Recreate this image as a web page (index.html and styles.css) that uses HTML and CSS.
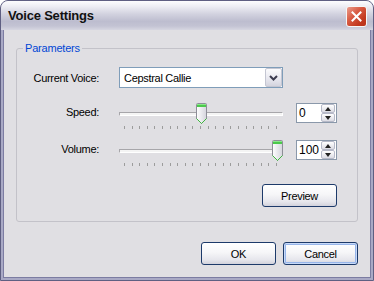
FILE: index.html
```html
<!DOCTYPE html>
<html lang="en">

<head>
    <meta charset="UTF-8">
    <meta name="viewport" content="width=device-width, initial-scale=1.0">
    <title>Voice Settings</title>
    <link rel="stylesheet" href="styles.css">
</head>

<body>
    <div class="window">
        <div class="titlebar">
            <span class="title">Voice Settings</span>
            <button class="close" title="Close">
                <svg width="11" height="11" viewBox="0 0 11 11">
                    <path d="M1.5 1.5 L9.5 9.5 M9.5 1.5 L1.5 9.5" stroke="#fff" stroke-width="2" stroke-linecap="square" fill="none"/>
                </svg>
            </button>
        </div>

        <div class="client">
            <div class="group">
                <div class="group-title">Parameters</div>

                <div class="row">
                    <label class="lbl">Current Voice:</label>
                    <div class="combo">
                        <span class="combo-text">Cepstral Callie</span>
                        <span class="combo-btn">
                            <svg width="9" height="6" viewBox="0 0 9 6">
                                <path d="M1 1 L4.5 4.5 L8 1" stroke="#3b3b4f" stroke-width="2" fill="none"/>
                            </svg>
                        </span>
                    </div>
                </div>

                <div class="row row-slider first">
                    <label class="lbl">Speed:</label>
                    <div class="slider">
                        <div class="channel">
                            <div class="track"></div>
                            <!-- value 0 of -10..10 -->
                            <span class="thumb" style="--pos: 0.5"></span>
                        </div>
                        <div class="ticks"></div>
                    </div>
                    <div class="spin">
                        <span class="spin-text">0</span>
                        <span class="spin-btns">
                            <span class="spin-btn up"></span>
                            <span class="spin-btn down"></span>
                        </span>
                    </div>
                </div>

                <div class="row row-slider">
                    <label class="lbl">Volume:</label>
                    <div class="slider">
                        <div class="channel">
                            <div class="track"></div>
                            <!-- value 100 of 0..100 -->
                            <span class="thumb" style="--pos: 1"></span>
                        </div>
                        <div class="ticks"></div>
                    </div>
                    <div class="spin">
                        <span class="spin-text">100</span>
                        <span class="spin-btns">
                            <span class="spin-btn up"></span>
                            <span class="spin-btn down"></span>
                        </span>
                    </div>
                </div>

                <div class="preview-row">
                    <button class="btn">Preview</button>
                </div>
            </div>

            <div class="actions">
                <button class="btn">OK</button>
                <button class="btn default">Cancel</button>
            </div>
        </div>
    </div>

    <script>
        // draw the 21 ticks under each slider
        document.querySelectorAll('.ticks').forEach(function (row) {
            for (let i = 0; i < 21; i++) {
                let t = document.createElement('span');
                t.className = 'tick';
                row.appendChild(t);
            }
        });

        // thumb graphic
        const thumbSvg =
            '<svg width="11" height="21" viewBox="0 0 11 21">' +
            '<defs><linearGradient id="tg" x1="0" y1="0" x2="1" y2="0">' +
            '<stop offset="0" stop-color="#ffffff"/><stop offset="1" stop-color="#d4d4dc"/>' +
            '</linearGradient></defs>' +
            '<path d="M1.5 0.5 H9.5 Q10.5 0.5 10.5 1.5 V15.5 L5.5 20.5 L0.5 15.5 V1.5 Q0.5 0.5 1.5 0.5 Z" fill="url(#tg)" stroke="#8e8e98"/>' +
            '<rect x="1" y="1" width="9" height="3" fill="#4cc94c"/>' +
            '<rect x="1" y="1" width="9" height="1" fill="#8ae88a"/>' +
            '<path d="M0.5 15.5 L5.5 20.5 L10.5 15.5" stroke="#3fb63f" fill="none"/>' +
            '</svg>';
        document.querySelectorAll('.thumb').forEach(function (t) {
            t.innerHTML = thumbSvg;
        });
    </script>
</body>

</html>
```

FILE: styles.css
```css
body {
    margin: 0;
    background-color: #ffffff;
    font-family: 'Liberation Sans', Arial, sans-serif;
    font-size: 11px;
    color: #000;
}
.window {
    width: 374px;
    height: 281px;
    box-sizing: border-box;
    border: 1px solid #5f5f82;
    border-radius: 8px 8px 0 0;
    background-color: #a9a9c5;
    padding: 0 2px 2px;
    display: flex;
    flex-direction: column;
}
.titlebar {
    height: 29px;
    margin: 0 -2px;
    border-radius: 7px 7px 0 0;
    background: linear-gradient(#fdfdfe 0%, #eeeef4 18%, #d2d2df 45%, #bdbdcf 70%, #c3c3d3 86%, #d6d6e1 100%);
    display: flex;
    align-items: center;
    justify-content: space-between;
    padding: 0 6px 0 7px;
}
.title {
    font-weight: bold;
    font-size: 13px;
    letter-spacing: -0.2px;
    color: #111;
}
.close {
    width: 21px;
    height: 21px;
    padding: 0;
    border: 1px solid #f6f6f6;
    border-radius: 3px;
    background: linear-gradient(135deg, #ea9c8c 0%, #d85b43 40%, #c2381f 75%, #b9331c 100%);
    display: flex;
    align-items: center;
    justify-content: center;
    margin-top: 1px;
}
.client {
    flex: 1;
    background-color: #e0dfe3;
    border: 1px solid #7c7ca2;
    border-top: none;
    padding-top: 18px;
}
.group {
    margin: 0 12px;
    height: 174px;
    box-sizing: border-box;
    border: 1px solid #c3c2c9;
    border-radius: 3px;
    padding-right: 20px;
}
.group-title {
    width: fit-content;
    margin: -7px 0 0 6px;
    padding: 0 2px;
    line-height: 13px;
    background-color: #e0dfe3;
    color: #0046d5;
    letter-spacing: -0.2px;
}
.row {
    display: flex;
    align-items: center;
    margin-top: 12px;
}
.lbl {
    width: 82px;
    margin-right: 20px;
    text-align: right;
    letter-spacing: -0.3px;
}
.combo {
    width: 164px;
    height: 21px;
    box-sizing: border-box;
    border: 1px solid #7f9db9;
    background-color: #fff;
    display: flex;
    align-items: center;
    justify-content: space-between;
}
.combo-text {
    padding-left: 4px;
    letter-spacing: -0.3px;
}
.combo-btn {
    width: 17px;
    height: 19px;
    box-sizing: border-box;
    border: 1px solid #c4c6d2;
    border-radius: 2px;
    background: linear-gradient(#fbfbfd, #e6e6ee 60%, #d4d4de);
    display: flex;
    align-items: center;
    justify-content: center;
}
.row-slider {
    align-items: flex-start;
    margin-top: 11px;
}
.row-slider.first {
    margin-top: 15px;
}
.row-slider .lbl {
    line-height: 19px;
}
.slider {
    width: 164px;
}
.channel {
    position: relative;
    height: 21px;
    display: flex;
    align-items: center;
}
.track {
    width: 100%;
    height: 4px;
    box-sizing: border-box;
    border: 1px solid;
    border-color: #a7a6aa #ffffff #ffffff #a7a6aa;
    background-color: #f4f4f4;
}
.thumb {
    position: absolute;
    top: 0;
    left: calc(var(--pos) * 153px);
    width: 11px;
    height: 21px;
}
.thumb svg {
    display: block;
}
.ticks {
    margin: 2px 6px 0 5px;
    height: 3px;
    display: flex;
    justify-content: space-between;
}
.tick {
    width: 1px;
    height: 3px;
    background-color: #9c9c9c;
}
.spin {
    margin-left: 13px;
    width: 41px;
    height: 20px;
    box-sizing: border-box;
    border: 1px solid #8a98aa;
    background-color: #fff;
    display: flex;
    justify-content: space-between;
    align-items: center;
}
.spin-text {
    padding-left: 2px;
    font-size: 12px;
}
.spin-btns {
    display: flex;
    flex-direction: column;
    margin-right: 1px;
}
.spin-btn {
    width: 14px;
    height: 9px;
    box-sizing: border-box;
    border: 1px solid #b6b9c8;
    border-radius: 2px;
    background: linear-gradient(#ffffff, #dcdce4);
    display: flex;
    align-items: center;
    justify-content: center;
}
.spin-btn::after {
    content: '';
    width: 0;
    height: 0;
    border-left: 3.5px solid transparent;
    border-right: 3.5px solid transparent;
}
.spin-btn.up::after {
    border-bottom: 4px solid #222;
}
.spin-btn.down::after {
    border-top: 4px solid #222;
}
.preview-row {
    display: flex;
    justify-content: flex-end;
    margin-top: 18px;
}
.btn {
    width: 75px;
    height: 23px;
    padding: 0;
    border: 1px solid #1d3a6a;
    border-radius: 3px;
    background: linear-gradient(#ffffff 0%, #f6f6f8 45%, #e6e6ec 80%, #d2d2dc 100%);
    font-family: 'Liberation Sans', Arial, sans-serif;
    font-size: 11px;
    letter-spacing: -0.3px;
    color: #000;
}
.btn.default {
    box-shadow: inset 0 0 0 1px #c8daf8, inset 0 0 0 2px #97b5ea;
}
.actions {
    display: flex;
    justify-content: flex-end;
    gap: 7px;
    margin-top: 20px;
    padding-right: 12px;
}
```
